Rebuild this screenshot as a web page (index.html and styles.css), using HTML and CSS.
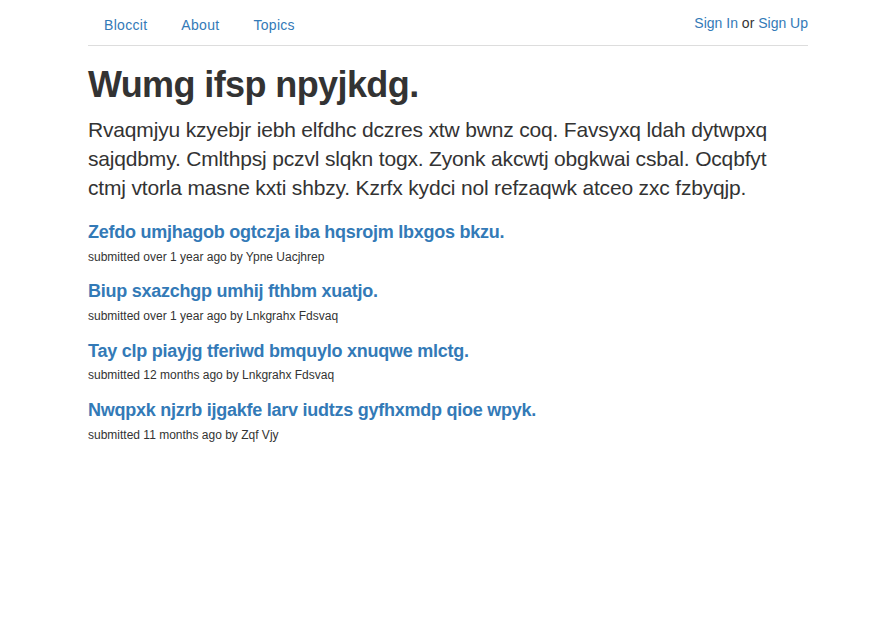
FILE: index.html
```html
<!DOCTYPE html>
<html lang="en">
<head>
<meta charset="utf-8">
<title>Bloccit</title>
<link rel="stylesheet" href="styles.css">
</head>
<body>
<div class="container">
  <nav class="topnav">
    <ul class="tabs">
      <li><a href="#">Bloccit</a></li>
      <li><a href="#">About</a></li>
      <li><a href="#">Topics</a></li>
    </ul>
    <div class="auth"><a href="#">Sign In</a> or <a href="#">Sign Up</a></div>
  </nav>
  <h1 class="title">Wumg ifsp npyjkdg.</h1>
  <p class="lead">Rvaqmjyu kzyebjr iebh elfdhc dczres xtw bwnz coq. Favsyxq ldah dytwpxq sajqdbmy. Cmlthpsj pczvl slqkn togx. Zyonk akcwtj obgkwai csbal. Ocqbfyt ctmj vtorla masne kxti shbzy. Kzrfx kydci nol refzaqwk atceo zxc fzbyqjp.</p>
  <div class="posts">
    <div class="media">
      <h4 class="media-heading"><a href="#">Zefdo umjhagob ogtczja iba hqsrojm lbxgos bkzu.</a></h4>
      <small class="meta">submitted over 1 year ago by Ypne Uacjhrep</small>
    </div>
    <div class="media">
      <h4 class="media-heading"><a href="#">Biup sxazchgp umhij fthbm xuatjo.</a></h4>
      <small class="meta">submitted over 1 year ago by Lnkgrahx Fdsvaq</small>
    </div>
    <div class="media">
      <h4 class="media-heading"><a href="#">Tay clp piayjg tferiwd bmquylo xnuqwe mlctg.</a></h4>
      <small class="meta">submitted 12 months ago by Lnkgrahx Fdsvaq</small>
    </div>
    <div class="media">
      <h4 class="media-heading"><a href="#">Nwqpxk njzrb ijgakfe larv iudtzs gyfhxmdp qioe wpyk.</a></h4>
      <small class="meta">submitted 11 months ago by Zqf Vjy</small>
    </div>
  </div>
</div>
</body>
</html>
```
FILE: styles.css
```css
* { box-sizing: border-box; }
html, body { margin: 0; padding: 0; background: #fff; }
body {
  font-family: "Liberation Sans", Arial, Helvetica, sans-serif;
  font-size: 14px;
  line-height: 20px;
  color: #333;
}
a { color: #337ab7; text-decoration: none; }
.container {
  width: 750px;
  margin: 0 auto;
  padding: 0 15px;
}
.topnav {
  display: flex;
  justify-content: space-between;
  align-items: flex-start;
  border-bottom: 1px solid #ddd;
  padding-top: 5px;
}
.tabs {
  list-style: none;
  margin: 0;
  padding: 0;
  display: flex;
}
.tabs li a {
  display: block;
  padding: 10px 15px 10px 16px;
  margin-right: 3px;
  letter-spacing: 0.3px;
}
.auth {
  padding-top: 8px;
}
.title {
  font-size: 36px;
  font-weight: bold;
  line-height: 1.1;
  letter-spacing: -0.6px;
  margin: 19px 0 10px;
}
.lead {
  font-size: 21px;
  line-height: 1.4;
  letter-spacing: -0.17px;
  margin: 0 0 20px;
}
.posts {
  display: flex;
  flex-direction: column;
}
.media + .media { margin-top: 15.6px; }
.media-heading {
  font-size: 18px;
  font-weight: bold;
  line-height: 1.1;
  letter-spacing: -0.25px;
  margin: 0 0 4px;
}
.meta {
  display: block;
  font-size: 12px;
  line-height: 20px;
}
```
